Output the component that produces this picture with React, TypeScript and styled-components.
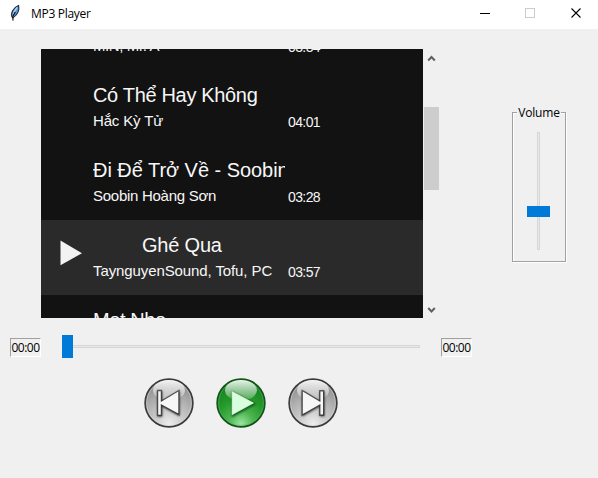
import React from 'react';
import styled, { createGlobalStyle } from 'styled-components';

const Global = createGlobalStyle`
  html, body { margin: 0; padding: 0; background: #f0f0f0; }
  * { box-sizing: border-box; }
`;

const Window = styled.div`
  width: 598px;
  height: 478px;
  display: flex;
  flex-direction: column;
  overflow: hidden;
  background: #f0f0f0;
  color: #000;
  font: 12px/16px 'Open Sans', 'Noto Sans', sans-serif;
`;

const TitleBar = styled.header`
  height: 29px;
  flex: none;
  display: flex;
  align-items: flex-start;
  background: #fff;
  padding-left: 8px;
`;

const FeatherIcon = styled.svg`
  width: 14px;
  height: 18px;
  margin-top: 4px;
`;

const Caption = styled.span`
  margin: 6px auto 0 9px;
  font-size: 12px;
  letter-spacing: -0.3px;
  white-space: nowrap;
`;

const WindowControls = styled.svg`
  width: 106px;
  height: 12px;
  margin: 7px 12px 0 0;
  shape-rendering: crispEdges;
`;

const Upper = styled.main`
  display: flex;
  align-items: flex-start;
  padding: 20px 0 0 41px;
  height: 289px;
`;

const Playlist = styled.section`
  width: 382px;
  height: 269px;
  overflow: hidden;
  background: #121212;
`;

const PlaylistContent = styled.div`
  margin-top: -54px;
`;

const Row = styled.article<{ $active?: boolean }>`
  height: 75px;
  display: grid;
  grid-template-columns: 52px 192px 1fr;
  grid-template-rows: 24px 18px;
  row-gap: 5px;
  padding-top: 13px;
  background: ${(p) => (p.$active ? '#2a2a2a' : '#121212')};
  color: #f7f7f7;
  font-family: 'Liberation Sans', Arial, sans-serif;
  white-space: nowrap;
`;

const PlayingMark = styled.svg`
  grid-column: 1;
  grid-row: 1 / 3;
  width: 24px;
  height: 28px;
  margin: 6px 0 0 18px;
`;

const SongTitle = styled.div<{ $indent?: number; $spacing?: number }>`
  grid-column: 2;
  grid-row: 1;
  overflow: hidden;
  padding-left: ${(p) => p.$indent ?? 0}px;
  font-size: 20px;
  line-height: 24px;
  letter-spacing: ${(p) => p.$spacing ?? 0}px;
`;

const Artist = styled.div<{ $spacing?: number }>`
  grid-column: 2;
  grid-row: 2;
  font-size: 15px;
  line-height: 18px;
  letter-spacing: ${(p) => p.$spacing ?? 0}px;
`;

const Duration = styled.time`
  grid-column: 3;
  grid-row: 2;
  margin: 1px 0 0 3px;
  font-size: 14px;
  line-height: 18px;
  letter-spacing: -0.6px;
`;

const Scrollbar = styled.div`
  width: 15px;
  height: 269px;
  margin-left: 1px;
  display: flex;
  flex-direction: column;
  align-items: center;
`;

const ScrollArrow = styled.svg`
  width: 15px;
  height: 17px;
  flex: none;
`;

const ScrollThumb = styled.div`
  width: 15px;
  height: 83px;
  margin: 41px 0 auto;
  background: #cdcdcd;
`;

const VolumeGroup = styled.section`
  width: 54px;
  height: 150px;
  margin: 63px 0 0 73px;
  border: 1px solid #a0a0a0;
  box-shadow: 1px 1px 0 #fff, inset 1px 1px 0 #fff;
  display: flex;
  flex-direction: column;
  align-items: center;
`;

const VolumeLabel = styled.div`
  height: 16px;
  margin-top: -8px;
  padding: 0 1px;
  background: #f0f0f0;
  font-size: 12px;
  letter-spacing: -0.15px;
  white-space: nowrap;
`;

const VolumeTrack = styled.div`
  width: 23px;
  height: 118px;
  margin: 11px 1px 0 0;
  align-self: flex-start;
  margin-left: 14px;
  display: grid;
  justify-items: center;
`;

const Groove = styled.div<{ $vertical?: boolean }>`
  grid-area: 1 / 1;
  width: ${(p) => (p.$vertical ? '3px' : '100%')};
  height: ${(p) => (p.$vertical ? '100%' : '3px')};
  border: 1px solid #d6d6d6;
  background: #e7eaea;
`;

const Handle = styled.div<{ $vertical?: boolean }>`
  grid-area: 1 / 1;
  width: ${(p) => (p.$vertical ? 23 : 11)}px;
  height: ${(p) => (p.$vertical ? 11 : 23)}px;
  margin-top: ${(p) => (p.$vertical ? 74 : 0)}px;
  background: #007ad9;
`;

const Timeline = styled.section`
  display: flex;
  align-items: center;
  height: 57px;
  padding-left: 10px;
`;

const TimeBox = styled.div`
  width: 31px;
  height: 19px;
  margin-top: 2px;
  border: 1px solid;
  border-color: #a0a0a0 #fff #fff #a0a0a0;
  font-size: 12px;
  line-height: 18px;
  letter-spacing: -0.5px;
  text-align: center;
  white-space: nowrap;
`;

const SeekTrack = styled.div`
  width: 358px;
  height: 23px;
  margin: 0 21px;
  display: grid;
  align-items: center;
`;

const Transport = styled.nav`
  display: flex;
  gap: 22px;
  padding: 3px 0 0 144px;
`;

const RoundButton = styled.button`
  width: 50px;
  height: 50px;
  padding: 0;
  border: 0;
  background: none;
`;

const Face = styled.svg`
  display: block;
  width: 50px;
  height: 50px;
`;

type Kind = 'previous' | 'play' | 'next';

const shapes: Record<Kind, string> = {
  previous: 'M14.2 13.2h2.6v10.9L34.3 13.6v22L16.8 26v10.8H14.2z',
  play: 'M16.2 13.7L37.4 25 16.2 36.6z',
  next: 'M14.8 13.6L32.4 24.1V13.4H35V36.6H32.4V26L14.8 36z',
};

function TransportButton({ kind }: { kind: Kind }) {
  const green = kind === 'play';
  const base = green
    ? ['#9be69f', '#4db552', '#259a2b', '#158020']
    : ['#ededed', '#cfcfcf', '#b3b3b3', '#8d8d8d'];
  return (
    <RoundButton aria-label={kind}>
      <Face viewBox="0 0 50 50">
        <defs>
          <radialGradient id={`${kind}-base`} gradientUnits="userSpaceOnUse" cx="25" cy="46" r="42">
            <stop offset="0" stopColor={base[0]} />
            <stop offset="0.3" stopColor={base[1]} />
            <stop offset="0.6" stopColor={base[2]} />
            <stop offset="1" stopColor={base[3]} />
          </radialGradient>
          <linearGradient id={`${kind}-shine`} x1="0" y1="0" x2="0" y2="1">
            <stop offset="0" stopColor="#fff" stopOpacity="0.9" />
            <stop offset="1" stopColor="#fff" stopOpacity="0.2" />
          </linearGradient>
          <filter id={`${kind}-shadow`} x="-30%" y="-30%" width="160%" height="160%">
            <feGaussianBlur stdDeviation="0.8" />
          </filter>
        </defs>
        <circle cx="25" cy="25" r="23.8" fill={`url(#${kind}-base)`} stroke={green ? '#12541a' : '#3b3b3b'} strokeWidth="1.8" />
        <circle cx="25" cy="25" r="22.4" fill="none" stroke={green ? '#5fb864' : '#dedede'} strokeWidth="0.9" opacity="0.6" />
        <ellipse cx="25" cy="12.2" rx="16" ry="10.2" fill={`url(#${kind}-shine)`} />
        {green ? (
          <path d={shapes[kind]} transform="translate(0.6 1.1)" fill="#07470d" stroke="#07470d" strokeWidth="2" opacity="0.8" filter={`url(#${kind}-shadow)`} />
        ) : (
          <>
            <path d={shapes[kind]} fill="none" stroke="#6c6c6c" strokeWidth="2.8" />
            <path d={shapes[kind]} transform="translate(0.4 0.9)" fill="none" stroke="#101010" strokeWidth="2" opacity="0.75" filter={`url(#${kind}-shadow)`} />
          </>
        )}
        <path d={shapes[kind]} fill={green ? '#d8ffdd' : '#f6f6f6'} stroke={green ? '#f2fff2' : 'none'} strokeWidth="0.7" />
      </Face>
    </RoundButton>
  );
}

interface Song {
  title: string;
  artist: string;
  duration: string;
  active?: boolean;
  indent?: number;
  titleSpacing?: number;
  artistSpacing?: number;
}

const songs: Song[] = [
  { title: '', artist: 'MIN, Mr. A', duration: '03:34', artistSpacing: -0.4 },
  { title: 'Có Thể Hay Không', artist: 'Hắc Kỳ Tử', duration: '04:01', titleSpacing: -0.33, artistSpacing: -0.15 },
  { title: 'Đi Để Trở Về - Soobin', artist: 'Soobin Hoàng Sơn', duration: '03:28', titleSpacing: -0.04, artistSpacing: -0.27 },
  { title: 'Ghé Qua', artist: 'TaynguyenSound, Tofu, PC', duration: '03:57', active: true, indent: 49, titleSpacing: -0.2, artistSpacing: -0.1 },
  { title: 'Mot Nho', artist: '', duration: '', titleSpacing: -0.4 },
];

export default function App() {
  return (
    <Window>
      <Global />
      <TitleBar>
        <FeatherIcon viewBox="0 0 14 18">
          <path d="M4.2 13.2C2.3 9.5 5 3.5 10.6 1.4c.8 3.9-.6 8.8-5.1 12z" fill="#5b9bdd" stroke="#222b35" strokeWidth="1.1" />
          <path d="M9.1 3.4C6.3 6.3 5.3 9.2 4.8 12.5" fill="none" stroke="#bde0ff" strokeWidth="1.2" />
          <path d="M7.3 8L4.8 12.5 5 16.5" fill="none" stroke="#111" strokeWidth="1.2" />
        </FeatherIcon>
        <Caption>MP3 Player</Caption>
        <WindowControls viewBox="0 0 106 12">
          <path d="M0 6.5H10" stroke="#000" />
          <rect x="45.5" y="1.5" width="9" height="9" fill="none" stroke="#ccc" />
          <path d="M91.5 1.5L100.5 10.5M100.5 1.5L91.5 10.5" stroke="#000" strokeWidth="1.1" shapeRendering="auto" />
        </WindowControls>
      </TitleBar>
      <Upper>
        <Playlist>
          <PlaylistContent>
            {songs.map((song, i) => (
              <Row key={i} $active={song.active}>
                {song.active && (
                  <PlayingMark viewBox="0 0 24 28">
                    <path d="M1.5 1.5L23 14.2 1.5 26.2z" fill="#f3f3f3" />
                  </PlayingMark>
                )}
                <SongTitle $indent={song.indent} $spacing={song.titleSpacing}>{song.title}</SongTitle>
                <Artist $spacing={song.artistSpacing}>{song.artist}</Artist>
                <Duration>{song.duration}</Duration>
              </Row>
            ))}
          </PlaylistContent>
        </Playlist>
        <Scrollbar>
          <ScrollArrow viewBox="0 0 15 17">
            <path d="M4.2 11.5L7.5 8l3.3 3.5" fill="none" stroke="#606060" strokeWidth="2" />
          </ScrollArrow>
          <ScrollThumb />
          <ScrollArrow viewBox="0 0 15 17">
            <path d="M4.2 7L7.5 10.5l3.3-3.5" fill="none" stroke="#606060" strokeWidth="2" />
          </ScrollArrow>
        </Scrollbar>
        <VolumeGroup>
          <VolumeLabel>Volume</VolumeLabel>
          <VolumeTrack>
            <Groove $vertical />
            <Handle $vertical />
          </VolumeTrack>
        </VolumeGroup>
      </Upper>
      <Timeline>
        <TimeBox>00:00</TimeBox>
        <SeekTrack>
          <Groove />
          <Handle />
        </SeekTrack>
        <TimeBox>00:00</TimeBox>
      </Timeline>
      <Transport>
        <TransportButton kind="previous" />
        <TransportButton kind="play" />
        <TransportButton kind="next" />
      </Transport>
    </Window>
  );
}
